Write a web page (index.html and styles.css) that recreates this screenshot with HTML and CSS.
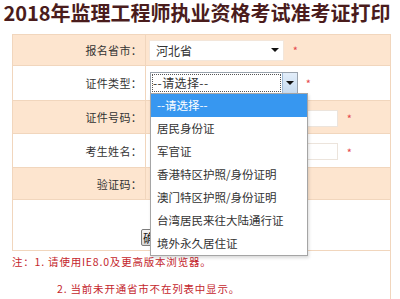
FILE: index.html
```html
<!DOCTYPE html>
<html lang="zh-CN">
<head>
    <meta charset="UTF-8">
    <meta name="viewport" content="width=device-width, initial-scale=1.0">
    <title>准考证打印</title>
    <link rel="stylesheet" href="styles.css">
</head>
<body>

<h1 class="page-title">2018年监理工程师执业资格考试准考证打印</h1>

<div class="print-box">
    <table class="print-table">
        <tr class="row-tint row-1">
            <td class="label">报名省市：</td>
            <td class="field">
                <div class="select-plain">
                    <span class="select-text">河北省</span>
                    <span class="arrow"></span>
                </div>
                <span class="star">*</span>
            </td>
        </tr>
        <tr class="row-2">
            <td class="label">证件类型：</td>
            <td class="field">
                <div class="select-open">
                    <span class="select-text focus">--请选择--</span>
                    <span class="select-btn"><span class="arrow"></span></span>

                    <!-- open option list -->
                    <ul class="option-list">
                        <li class="active">--请选择--</li>
                        <li>居民身份证</li>
                        <li>军官证</li>
                        <li>香港特区护照/身份证明</li>
                        <li>澳门特区护照/身份证明</li>
                        <li>台湾居民来往大陆通行证</li>
                        <li>境外永久居住证</li>
                    </ul>
                </div>
                <span class="star star-2">*</span>
            </td>
        </tr>
        <tr class="row-tint row-3">
            <td class="label">证件号码：</td>
            <td class="field">
                <input type="text" class="text-input">
                <span class="star">*</span>
            </td>
        </tr>
        <tr class="row-4">
            <td class="label">考生姓名：</td>
            <td class="field">
                <input type="text" class="text-input">
                <span class="star">*</span>
            </td>
        </tr>
        <tr class="row-tint row-5">
            <td class="label">验证码：</td>
            <td class="field"></td>
        </tr>
        <tr class="row-6">
            <td colspan="2" class="btn-cell">
                <button type="button" class="ok-btn">确定</button>
            </td>
        </tr>
    </table>

    <div class="note">
        <p class="note-line">注：1. 请使用IE8.0及更高版本浏览器。</p>
        <p class="note-line indent">2. 当前未开通省市不在列表中显示。</p>
    </div>
</div>

</body>
</html>
```

FILE: styles.css
```css
body {
    margin: 0;
    font-family: "Noto Sans CJK SC", "Noto Sans", sans-serif;
    color: #333;
    background-color: #fff;
}

.page-title {
    margin: 0;
    padding: 1px 6px 0 0;
    font-size: 20px;
    line-height: 24px;
    font-weight: bold;
    color: #4a1c1c;
    text-align: center;
}

.print-box {
    width: 379px;
    margin: 9px 0 0 12px;
}

.print-table {
    width: 100%;
    border-collapse: collapse;
    border: 1px solid #f1d6bd;
}

.print-table td {
    padding: 0;
    border-top: 1px solid #f1d6bd;
}

.row-tint {
    background-color: #fde5cf;
}

.row-1 td { height: 30px; }
.row-2 td { height: 34px; }
.row-3 td { height: 32px; }
.row-4 td { height: 33px; }
.row-5 td { height: 31px; }
.row-6 td { height: 46px; }

.label {
    width: 129px;
    padding-right: 3px !important;
    border-right: 1px solid #f1d6bd;
    text-align: right;
    font-size: 11px;
    letter-spacing: 0.3px;
}

.field {
    padding-left: 4px !important;
    font-size: 12px;
}

.field > * {
    vertical-align: middle;
}

/* selects drawn as boxes */
.select-plain, .select-open {
    display: inline-flex;
    align-items: center;
    background-color: #fff;
    box-sizing: border-box;
}

.select-plain {
    width: 135px;
    height: 21px;
    margin-left: -1px;
    border: 1px solid #f3e6da;
    justify-content: space-between;
    padding: 0 4px 0 6px;
}

.select-text {
    font-size: 12px;
    color: #333;
}

.arrow {
    width: 0;
    height: 0;
    border-left: 4px solid transparent;
    border-right: 4px solid transparent;
    border-top: 4px solid #111;
}

.select-open {
    position: relative;
    width: 148px;
    height: 22px;
    border: 1px solid #9aa3ad;
}

.select-text.focus {
    flex: 1;
    height: 18px;
    line-height: 18px;
    margin: 1px;
    padding-left: 1px;
    letter-spacing: 0.4px;
    outline: 1px dotted #555;
    outline-offset: -1px;
}

.select-btn {
    width: 14px;
    height: 20px;
    display: flex;
    align-items: center;
    justify-content: center;
    background: linear-gradient(#e3eefa, #c6dbf0);
    border-left: 1px solid #9ebbd8;
}

.option-list {
    position: absolute;
    top: 20px;
    left: -1px;
    width: 156px;
    margin: 0;
    padding: 0;
    list-style: none;
    background-color: #fff;
    border: 1px solid #a5a5a5;
    box-shadow: 1px 2px 3px rgba(0, 0, 0, 0.15);
    z-index: 5;
}

.option-list li {
    height: 23px;
    line-height: 23px;
    padding-left: 6px;
    font-size: 11.5px;
    color: #333;
    white-space: nowrap;
}

.option-list li.active {
    background-color: #3797f0;
    color: #fff;
}

.text-input {
    width: 188px;
    height: 17px;
    box-sizing: border-box;
    border: 1px solid #ece4dc;
    background-color: #fff;
    padding: 0;
    margin: 0;
}

.star {
    color: #e5474b;
    font-size: 11px;
    margin-left: 6px;
}

.star-2 {
    margin-left: 5px;
}

.btn-cell {
    vertical-align: bottom;
    padding: 0 0 4px 128px !important;
    background-color: #fff;
}

.ok-btn {
    display: block;
    width: 44px;
    height: 17px;
    padding: 0 0 0 1px;
    text-align: left;
    font-family: "Noto Sans CJK SC", sans-serif;
    font-size: 12px;
    line-height: 15px;
    color: #222;
    background: linear-gradient(#f6f6f6, #d8d8d8);
    border: 1px solid #7c7c7c;
    border-radius: 2px;
}

/* notes under the form */
.note {
    border-right: 1px solid #f1d6bd;
    height: 50px;
    color: #c4262c;
    font-size: 10.5px;
    letter-spacing: 0.8px;
}

.note-line {
    margin: 0;
    line-height: 22px;
}

.note-line + .note-line {
    margin-top: 5px;
}

.indent {
    padding-left: 45px;
}
```
